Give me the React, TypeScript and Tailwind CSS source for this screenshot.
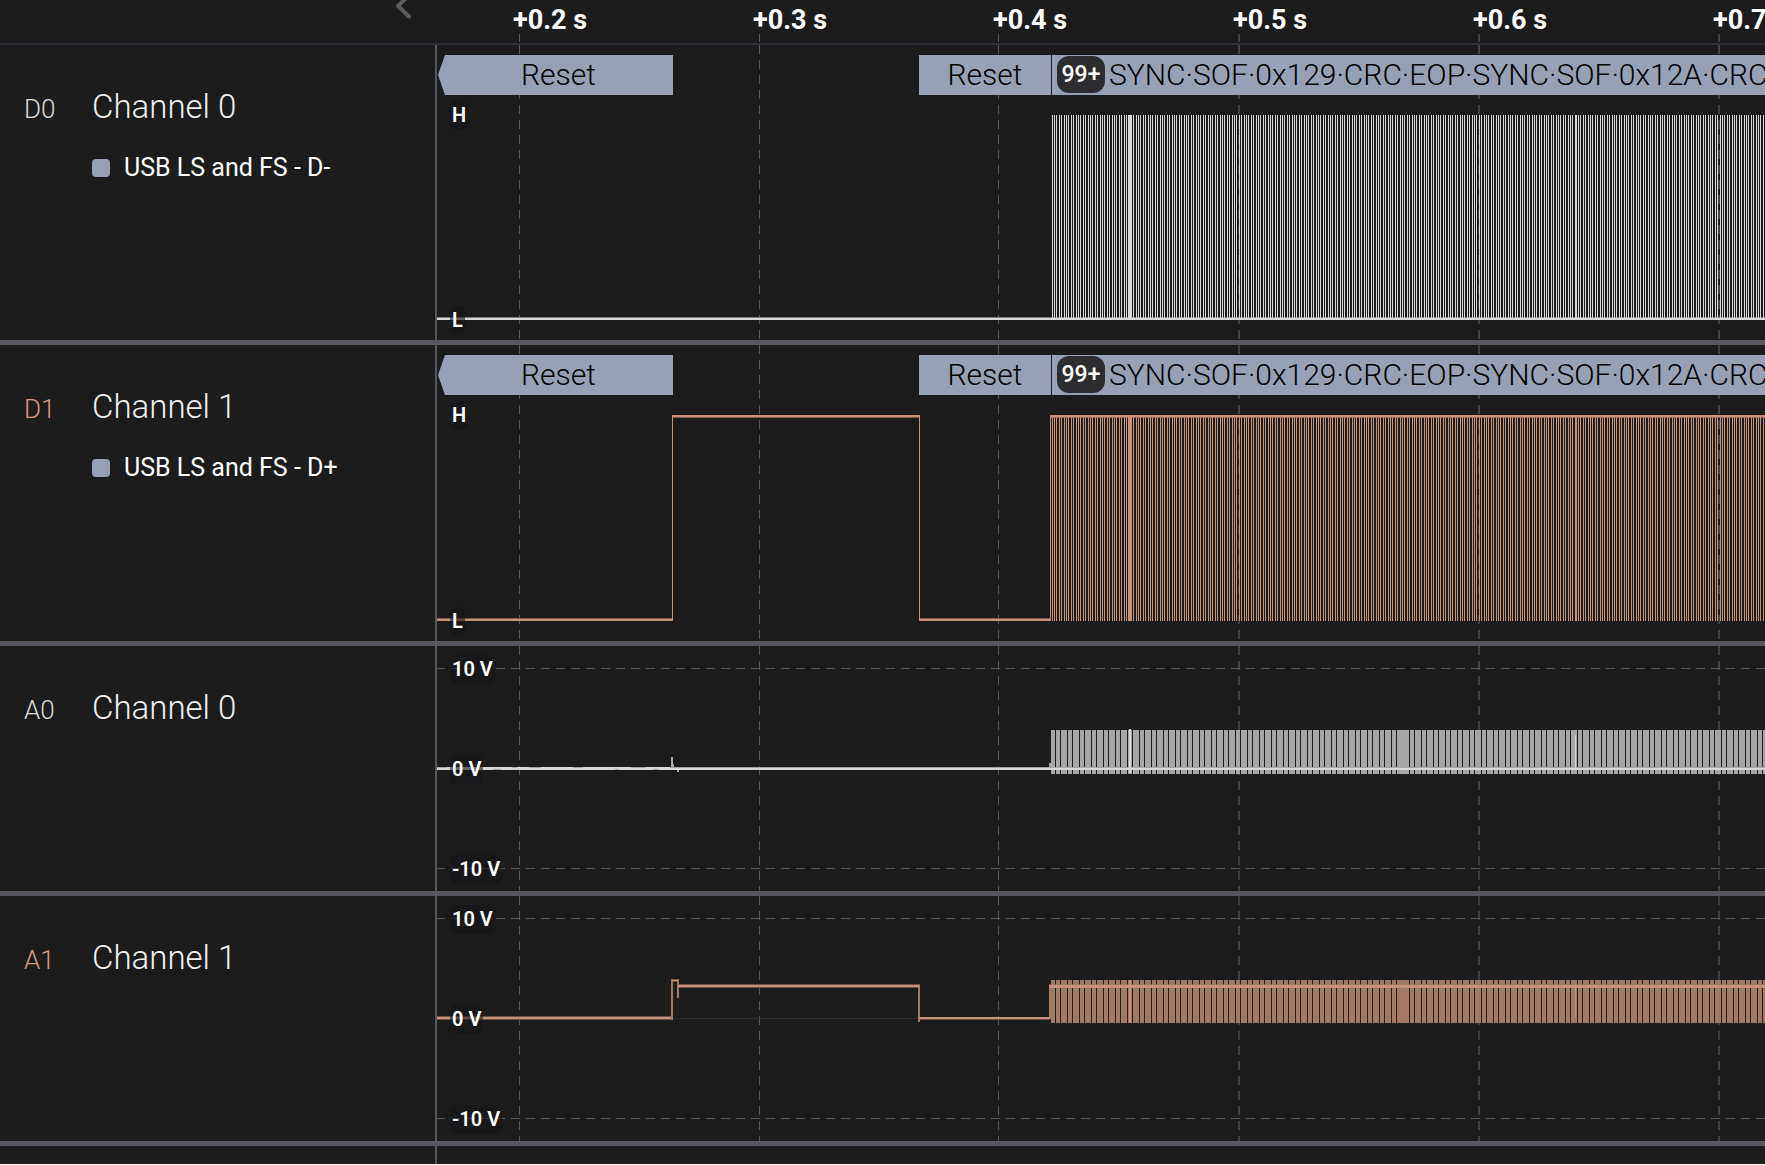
import React from "react";

const TRACE_END = 3840;
const WHITE = "#d8d8d8";
const WHITE_DIM = "#a6a6a6";
const COPPER = "#c8937a";
const COPPER_DIM = "#a17a65";
const COPPER_EDGE = "#6b5348";
const GRID = "#57575f";

const TICKS = ["+0.2 s", "+0.3 s", "+0.4 s", "+0.5 s", "+0.6 s", "+0.7 s"];
// Offsets from the left edge of a track; soft lines fall between two pixels.
const GRID_LINES = [
  { x: 82, soft: false },
  { x: 322, soft: false },
  { x: 561, soft: false },
  { x: 801, soft: true },
  { x: 1041, soft: true },
  { x: 1281, soft: true },
  { x: 1522, soft: false },
  { x: 1762, soft: false },
];

function rect(x: number, y: number, w: number, h: number) {
  return `M${x} ${y}h${w}v${h}h${-w}z`;
}

// One pulse per 1 ms frame, 2.4 px apart, each a pixel wide.
function framePulses(y: number, height: number) {
  let d = "";
  for (let k = 0; k <= 218; k++) {
    d += rect(Math.floor(615 + k * 2.4 + 0.1), y, 1, height);
  }
  for (let k = 0; 1139 + k * 2.4 < TRACE_END; k++) {
    d += rect(Math.floor(1139 + k * 2.4 + 0.1), y, 1, height);
  }
  return d + rect(692, y, 3, height);
}

// Blocks of sampled analog activity with a one-pixel gap between them.
function analogBlocks(y: number, height: number) {
  const gaps: number[] = [];
  for (let x = 618; x < 963; x += 12) gaps.push(x, x + 5);
  for (let x = 972; x < TRACE_END; x += 12) gaps.push(x, x + 5);
  let d = "";
  let start = 614;
  for (const gap of gaps) {
    d += rect(start, y, gap - start, height);
    start = gap + 1;
  }
  return d;
}

function VerticalGrid() {
  return (
    <g stroke={GRID} strokeDasharray="9 6" shapeRendering="crispEdges">
      {GRID_LINES.map(({ x, soft }) => (
        <line
          key={x}
          x1={soft ? x + 1 : x + 0.5}
          x2={soft ? x + 1 : x + 0.5}
          y1="0"
          y2="100%"
          strokeWidth={soft ? 2 : 1}
          strokeOpacity={soft ? 0.6 : 1}
        />
      ))}
    </g>
  );
}

function VoltGrid() {
  return (
    <g shapeRendering="crispEdges">
      <line x1="-1" x2="100%" y1="22.5" y2="22.5" stroke={GRID} strokeDasharray="9 6" />
      <line x1="0" x2="100%" y1="122.5" y2="122.5" stroke="#2f2f35" />
      <line x1="-1" x2="100%" y1="222.5" y2="222.5" stroke={GRID} strokeDasharray="9 6" />
    </g>
  );
}

function Plot({ children }: { children: React.ReactNode }) {
  return (
    <svg className="absolute inset-0 size-full" aria-hidden="true">
      <VerticalGrid />
      <g shapeRendering="crispEdges">{children}</g>
    </svg>
  );
}

function Digital0() {
  return (
    <Plot>
      <path d={rect(0, 272, TRACE_END, 1)} fill="#7c7c7c" />
      <path d={framePulses(70, 205)} fill={WHITE} />
      <path d={rect(0, 273, TRACE_END, 2)} fill={WHITE} />
    </Plot>
  );
}

function Digital1() {
  return (
    <Plot>
      <path
        d={rect(0, 273, 236, 1) + rect(236, 72, 246, 1) + rect(482, 273, 131, 1) + rect(613, 72, TRACE_END, 1)}
        fill="#7d5f51"
      />
      <path d={rect(613, 70, 1, 206) + framePulses(70, 206)} fill={COPPER} />
      <path
        d={
          rect(0, 274, 236, 2) +
          rect(235, 70, 1, 206) +
          rect(235, 70, 248, 2) +
          rect(482, 70, 1, 206) +
          rect(482, 274, 132, 2) +
          rect(613, 70, TRACE_END, 2)
        }
        fill={COPPER}
      />
    </Plot>
  );
}

function Analog0() {
  return (
    <Plot>
      <VoltGrid />
      <path
        d={
          rect(0, 121, TRACE_END, 1) +
          rect(234, 111, 2, 13) +
          rect(236, 118, 1, 4) +
          rect(240, 123, 2, 3) +
          rect(612, 117, 2, 5) +
          analogBlocks(84, 44)
        }
        fill={WHITE_DIM}
      />
      <path d={rect(0, 122, TRACE_END, 2) + rect(692, 83, 2, 44) + rect(1138, 89, 1, 33)} fill={WHITE} />
      <path
        d={
          rect(10, 121, 65, 1) +
          rect(80, 121, 12, 1) +
          rect(104, 121, 32, 1) +
          rect(146, 121, 48, 1) +
          rect(209, 121, 24, 1)
        }
        fill={WHITE}
      />
      <path d={rect(56, 123, 8, 1) + rect(178, 123, 4, 1) + rect(216, 123, 5, 1)} fill={WHITE_DIM} />
    </Plot>
  );
}

function Analog1() {
  return (
    <Plot>
      <VoltGrid />
      <path
        d={
          rect(0, 120, 234, 4) +
          rect(241, 88, 242, 4) +
          rect(483, 121, 130, 3) +
          rect(234, 83, 8, 3) +
          rect(612, 88, TRACE_END, 1)
        }
        fill={COPPER_EDGE}
      />
      <path
        d={
          rect(234, 83, 2, 41) +
          rect(240, 83, 2, 19) +
          rect(481, 89, 2, 37) +
          rect(612, 89, 2, 34) +
          analogBlocks(84, 43)
        }
        fill={COPPER_DIM}
      />
      <path
        d={
          rect(0, 121, 234, 2) +
          rect(235, 84, 6, 1) +
          rect(241, 89, 241, 2) +
          rect(482, 121, 131, 2) +
          rect(612, 89, TRACE_END, 3) +
          rect(692, 84, 2, 43) +
          rect(1138, 89, 1, 32)
        }
        fill={COPPER}
      />
    </Plot>
  );
}

function DecodeStrip() {
  return (
    <div className="relative flex h-10 overflow-hidden text-[30px] leading-10 font-light whitespace-nowrap text-black">
      <div className="ml-px w-[235px] shrink-0 bg-[#97a1b5] pl-1.5 text-center [clip-path:polygon(7px_0,100%_0,100%_100%,7px_100%,0_50%)]">
        Reset
      </div>
      <div className="ml-[246px] w-[132px] shrink-0 bg-[#97a1b5] text-center">Reset</div>
      <div className="ml-px flex min-w-0 flex-1 items-center gap-1 overflow-hidden bg-[#97a1b5] pl-[5px]">
        <span className="mb-px h-[37px] w-12 shrink-0 rounded-xl bg-[#2d2d2f] text-center text-[23px] leading-[37px] font-medium text-white">
          99+
        </span>
        <span>SYNC·SOF·0x129·CRC·EOP·SYNC·SOF·0x12A·CRC</span>
      </div>
    </div>
  );
}

function Level({ className, children }: { className: string; children: string }) {
  return (
    <span
      className={`absolute left-[13px] rounded-md bg-[#161619]/60 px-0.5 text-[20px] leading-[29px] font-semibold whitespace-pre text-white ${className}`}
    >
      {children}
    </span>
  );
}

function Channel(props: {
  id: string;
  name: string;
  analyzer?: string;
  accent?: boolean;
  height: string;
  children: React.ReactNode;
}) {
  const { id, name, analyzer, accent, height, children } = props;
  return (
    <section className={`flex border-b-5 border-[#57575f] ${height}`}>
      <div className="w-[437px] shrink-0 border-r-2 border-[#57575f] pt-[42px]">
        <div className="flex items-baseline">
          <span className={`w-[92px] pl-6 text-[26px] font-light ${accent ? "text-[#d89b80]" : "text-[#dcdcdc]"}`}>
            {id}
          </span>
          <h2 className="text-[33px] leading-10 font-light text-[#f0f0f0]">{name}</h2>
        </div>
        {analyzer && (
          <div className="mt-[23px] ml-[92px] flex items-center gap-3.5 text-[25px] leading-8 text-white">
            <span className="size-[18px] rounded-[4px] bg-[#97a1b5]" />
            {analyzer}
          </div>
        )}
      </div>
      <div className="relative min-w-0 flex-1 overflow-hidden">{children}</div>
    </section>
  );
}

function VoltLevels() {
  return (
    <>
      <Level className="top-[9px]">10 V</Level>
      <Level className="top-[109px]">0 V</Level>
      <Level className="top-[209px]">-10 V</Level>
    </>
  );
}

export default function App() {
  return (
    <main className="overflow-hidden bg-[#1c1c1c] font-['Roboto',sans-serif]">
      <header className="flex h-[45px] border-b-2 border-[#2f2f37]">
        <div className="flex w-[437px] shrink-0 items-start justify-end pr-6">
          <button type="button" aria-label="Collapse sidebar" className="overflow-hidden">
            <svg width="20" height="20" viewBox="0 0 20 20" fill="none">
              <path d="M16 -5L5 6L16 16.500" stroke="#5c5c5c" strokeWidth="4" strokeLinecap="round" strokeLinejoin="round" />
            </svg>
          </button>
        </div>
        <div className="relative min-w-0 flex-1">
          <svg className="absolute inset-x-0 top-[34px] h-2 w-full" aria-hidden="true">
            <VerticalGrid />
          </svg>
          <div className="flex overflow-hidden pl-[76px] text-[27px] leading-10 font-bold whitespace-nowrap text-white">
            {TICKS.map((tick) => (
              <span key={tick} className="w-60 shrink-0">
                {tick}
              </span>
            ))}
          </div>
        </div>
      </header>

      <Channel id="D0" name="Channel 0" analyzer="USB LS and FS - D-" height="h-[300px]">
        <Digital0 />
        <div className="pt-2.5">
          <DecodeStrip />
        </div>
        <Level className="top-[56px]">H</Level>
        <Level className="top-[261px]">L</Level>
      </Channel>
      <Channel id="D1" name="Channel 1" analyzer="USB LS and FS - D+" accent height="h-[301px]">
        <Digital1 />
        <div className="pt-2.5">
          <DecodeStrip />
        </div>
        <Level className="top-[56px]">H</Level>
        <Level className="top-[262px]">L</Level>
      </Channel>
      <Channel id="A0" name="Channel 0" height="h-[250px]">
        <Analog0 />
        <VoltLevels />
      </Channel>
      <Channel id="A1" name="Channel 1" accent height="h-[250px]">
        <Analog1 />
        <VoltLevels />
      </Channel>
      <div className="h-[18px] w-[437px] border-r-2 border-[#57575f]" />
    </main>
  );
}
